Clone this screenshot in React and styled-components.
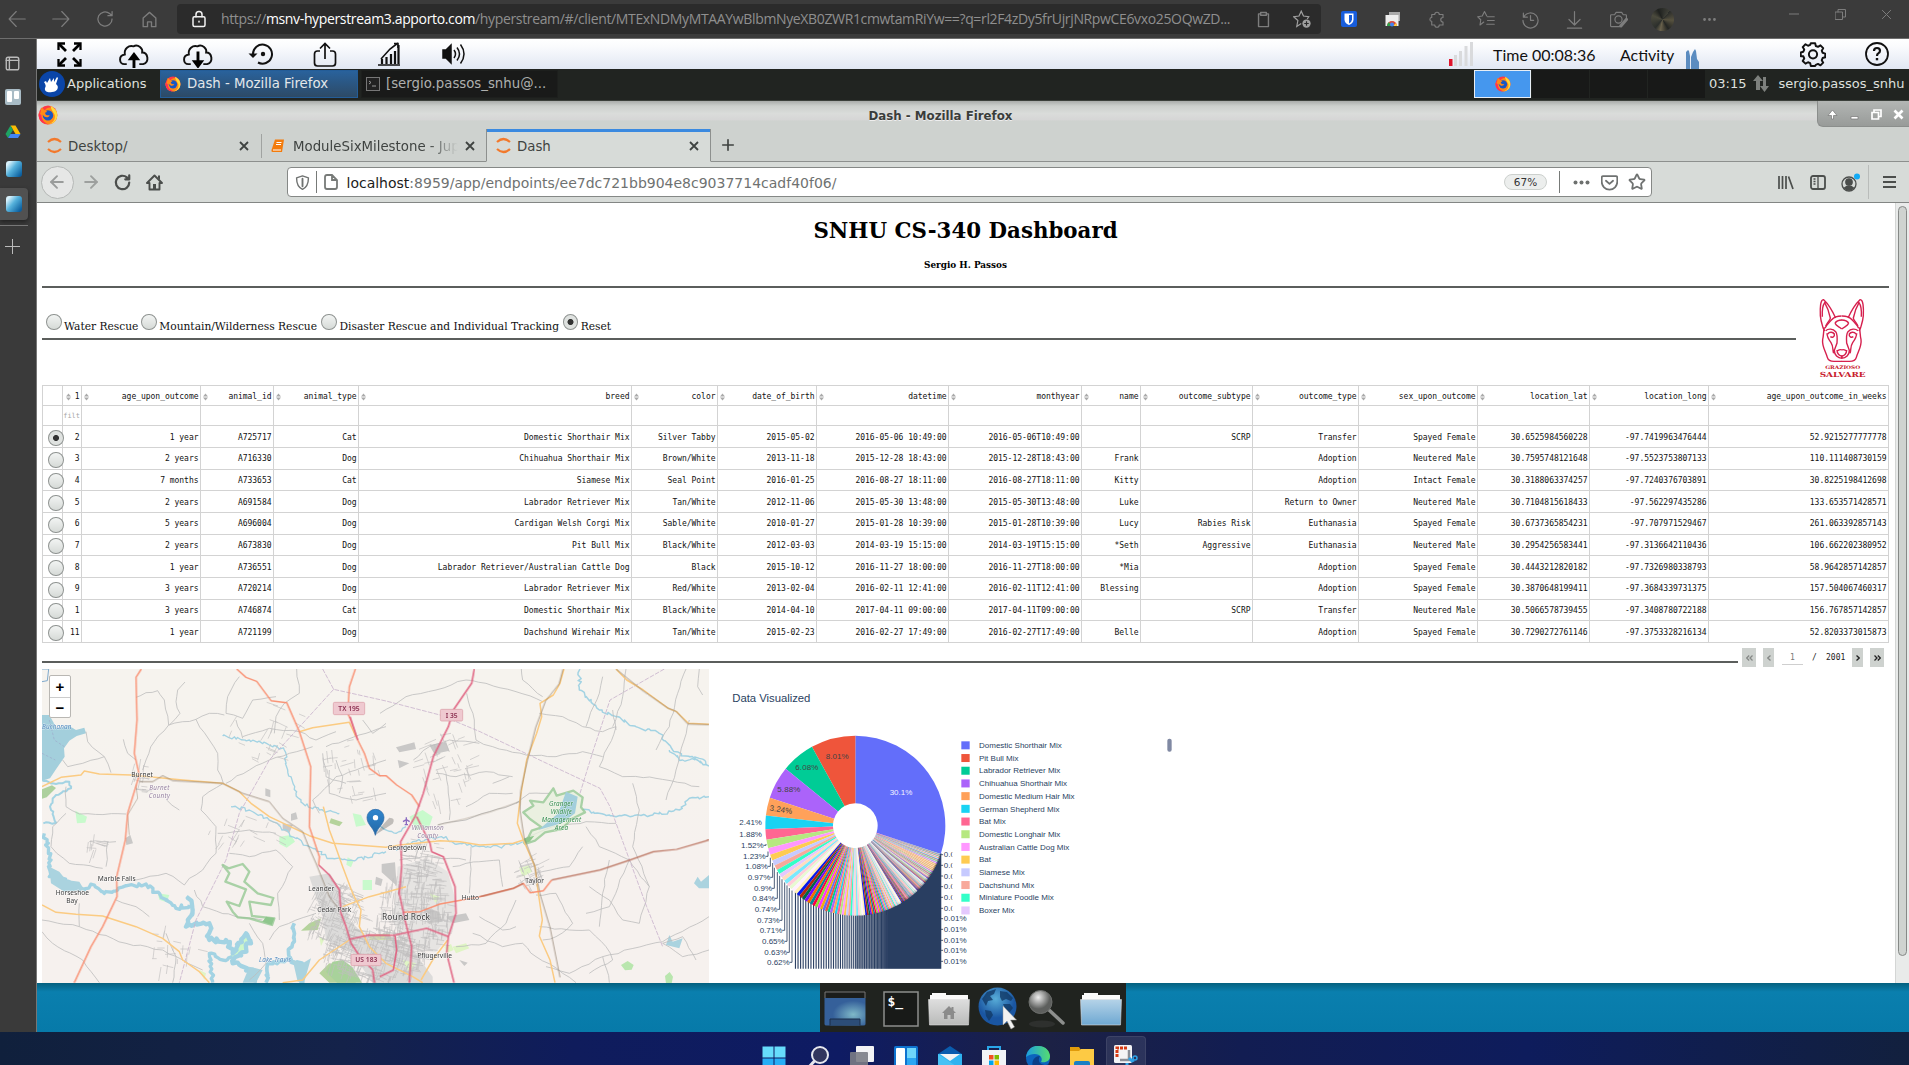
import React from "react";
import styled, { createGlobalStyle, css } from "styled-components";
import { ArrowLeft, ArrowRight, Plus, Star, Ellipsis } from "lucide-react";

const Global = createGlobalStyle`
  * { box-sizing: border-box; }
  body { margin: 0; overflow: hidden; background: #3b3b3b; }
  svg { display: block; flex: none; }
`;

const sans = `"DejaVu Sans", sans-serif`;
const serif = `"DejaVu Serif", serif`;
const mono = `"DejaVu Sans Mono", monospace`;

/* ---------- shell ---------- */
const Screen = styled.div`
  width: 1909px; height: 1065px; overflow: hidden;
  display: flex; flex-direction: column; background: #3b3b3b;
`;
const Row = styled.div`display: flex; height: 993px;`;
const Main = styled.main`width: 1872px; display: flex; flex-direction: column;`;
const Slot = styled.div`
  width: ${(p) => p.$w}px; height: 100%; flex: none;
  margin-left: ${(p) => p.$ml || 0}px;
  display: flex; align-items: center; justify-content: center;
`;
const Label = styled.span`
  white-space: pre; flex: none;
  margin-left: ${(p) => p.$ml || 0}px;
  width: ${(p) => (p.$w ? p.$w + "px" : "auto")};
`;

/* ---------- outer browser ---------- */
const EdgeBar = styled.header`
  height: 39px; display: flex; align-items: center; color: #7d7d7d;
  background: #3b3b3b; border-bottom: 1px solid #6e6e6e;
`;
const EdgeUrl = styled.div`
  margin-left: 6px; width: 1144px; height: 30px; border-radius: 4px;
  background: #2b2b2b; display: flex; align-items: center; flex: none;
`;
const EdgeText = styled.div`
  width: 1020px; white-space: pre; color: #8f8f8f;
  font: 14px/20px "Open Sans", sans-serif; letter-spacing: -0.353px;
  b { font-weight: 400; color: #fff; }
`;
const EdgeSep = styled.div`width: 1px; height: 16px; background: #6a6a6a; margin: 0 2px;`;
const WinButtons = styled.div`display: flex; height: 28px; align-self: flex-start; margin-left: 42px;`;
const Avatar = styled.div`
  width: 23px; height: 23px; border-radius: 50%;
  background: conic-gradient(from 40deg, #2a2c2a, #57523f, #232523 30%, #6a624c 42%, #2c2f2c 50%, #4b4a3d 70%, #1f211f 82%, #3e3f37);
`;

const Side = styled.aside`
  width: 37px; background: #3a3a3a; border-right: 1px solid #767676;
  display: flex; flex-direction: column; padding-top: 6px;
`;
const SideItem = styled.div`
  width: 28px; height: ${(p) => p.$h || 36}px;
  display: flex; align-items: center; padding-left: 4.5px;
  ${(p) => p.$on && css`background: #515151; border-radius: 0 4px 4px 0; box-shadow: 0 2px 4px #222; height: 32px; margin: 2px 0;`}
`;
const SideRule = styled.div`width: 28px; height: 1px; background: #777; margin-top: 3px;`;
const BlueBook = styled.div`
  width: 16px; height: 16px; border-radius: 3px; margin-left: 1px;
  background: linear-gradient(130deg, #d8f1fb 0 15%, #56b2dc 45%, #0b5f9f 90%);
`;

/* ---------- stream toolbar ---------- */
const StreamBar = styled.div`
  height: 30px; display: flex; align-items: center; color: #111;
  background: linear-gradient(#fff, #fafbfd 25%, #e1e7f3);
  font: 16px/30px Lato, sans-serif;
  ${Label} { padding-top: 2px; }
`;
const ActivityBars = styled.svg`margin-top: 10px;`;

/* ---------- desktop panel ---------- */
const Panel = styled.div`
  height: 32px; background: #212421; display: flex; align-items: center; padding-bottom: 2px;
  border-bottom: 1px solid #3b403b; color: #dfe0df; font: 13px/20px ${sans};
`;
const TaskButton = styled.div`
  height: 28px; width: ${(p) => p.$w}px; margin-left: ${(p) => p.$ml}px; flex: none;
  display: flex; align-items: center; padding: 1px 0 0 4px; gap: 6px; white-space: pre; font-size: 13.3px;
  background: ${(p) => (p.$on ? "linear-gradient(#29629c, #2d4a66)" : "#191a19")};
  border: 1px solid ${(p) => (p.$on ? "#245d98" : "#1d1f1d")};
  color: ${(p) => (p.$on ? "#e3e7ea" : "#aeb0ae")};
`;
const Pager = styled.div`
  width: 57px; height: 28px; flex: none; margin-left: ${(p) => p.$ml || 1}px;
  display: flex; align-items: center; justify-content: center;
  background: ${(p) => (p.$on ? "#4597ee" : "#181918")};
  border: 1px solid ${(p) => (p.$on ? "#e8eef5" : "#181918")};
`;

/* ---------- inner browser ---------- */
const TitleBar = styled.div`
  height: 28px; display: flex; align-items: center; flex: none;
  background: linear-gradient(#a9acaa, #ccd0cd 18%, #dadcda 45%, #d6d6d6 66%, #ced2cf 72%);
  color: #3a3d3b; font: bold 11.8px/20px ${sans}; text-shadow: 0 1px 0 #eee;
`;
const TitleText = styled.div`width: 150px; margin-left: 809.5px; white-space: pre; padding-top: 2px;`;
const TitleButtons = styled.div`
  margin-left: 798.5px; width: 92px; height: 26px; align-self: flex-start; display: flex; flex: none;
  background: linear-gradient(#b3b6b4, #989b99); border: 1px solid #8b8e8c; border-width: 0 0 1px 1px;
  border-radius: 0 0 0 6px; padding: 2px 0 0 3px;
`;
const TabStrip = styled.div`
  height: 33px; display: flex; background: #ced2cf; color: #3f4341; flex: none;
  font: 13.33px/34px ${sans};
`;
const Tab = styled.div`
  width: ${(p) => p.$w}px; height: 33px; display: flex; align-items: center; flex: none;
  border-bottom: 1px solid #8d908e; padding-top: 1px;
  ${(p) => p.$on && css`
    background: #d7dbd8; border: 1px solid #8d908e; border-bottom-color: #d7dbd8; border-top: 0;
    box-shadow: inset 0 3px 0 #3b8ae0;`}
`;
const TabName = styled.div`
  width: ${(p) => p.$w}px; height: 32px; margin-left: ${(p) => p.$ml || 5}px; overflow: hidden; white-space: pre;
  ${(p) => p.$fade && css`mask-image: linear-gradient(90deg, #000 80%, transparent 98%);`}
`;
const TabSep = styled.div`width: 1px; height: 24px; background: #a0a3a1; align-self: center; margin-left: auto;`;
const TabFill = styled.div`flex: 1; border-bottom: 1px solid #8d908e; padding-left: 8px; display: flex; align-items: center;`;
const NavBar = styled.div`
  height: 41px; flex: none; display: flex; align-items: center; background: #d7dbd8;
  border-bottom: 1px solid #838684; color: #4b4e4c;
`;
const BackCircle = styled.div`
  width: 33px; height: 33px; border: 1px solid #b5b8b6; border-radius: 50%; background: #e6e7e6;
  display: flex; align-items: center; justify-content: center; color: #9a9c9b;
`;
const UrlBox = styled.div`
  width: 1365px; height: 30px; margin-left: 119px; flex: none; background: #fff;
  border: 1px solid #858886; border-radius: 4px; display: flex; align-items: center;
  font: 14px/30px ${sans}; color: #6f7271; b { font-weight: 400; color: #1b1c1b; }
`;
const UrlText = styled.div`width: 1146px; padding: 1px 0 0 1.5px; white-space: pre;`;
const Pill = styled.div`
  width: 43px; height: 16px; border: 1px solid #ccd0cd; border-radius: 8px; background: #eceeed;
  font: 10.5px/15px ${sans}; color: #333; text-align: center; margin-left: 13px;
`;
const VRule = styled.div`width: 1px; height: ${(p) => p.$h || 22}px; background: ${(p) => p.$c || "#777a78"}; margin: 0 ${(p) => p.$r || 0}px 0 ${(p) => p.$l || 0}px; flex: none;`;

/* ---------- page ---------- */
const View = styled.div`height: 780px; display: flex; background: #fff; overflow: hidden;`;
const Page = styled.div`width: 1858px; padding: 0 6px 0 5px; display: flex; flex-direction: column; flex: none;`;
const Gutter = styled.div`width: 14px; background: #e9ebea; border-left: 1px solid #d4d6d5; padding: 3px 0 0 2px;`;
const Thumb = styled.div`width: 9px; height: 750px; border: 1px solid #868987; border-radius: 5px; background: #cfd3d0;`;
const Head = styled.div`height: 83px; text-align: center; color: #000; font-family: ${serif};`;
const H1 = styled.h1`margin: 0; padding-top: 15px; font-size: 21.35px; line-height: 26px;`;
const H5 = styled.h5`margin: 15px 0 0; font-size: 8.9px; line-height: 12px;`;
const Hr = styled.div`height: 2px; width: ${(p) => (p.$w ? p.$w + "px" : "100%")}; background: #5b5e5c; flex: none;`;
const Filters = styled.div`height: 97px; display: flex;`;
const FilterRow = styled.div`height: 50px; display: flex; padding: 26px 0 0 4px; font: 10.7px/14px ${serif}; color: #111;`;
const FilterItem = styled.label`width: ${(p) => p.$w}px; display: flex; flex: none; white-space: pre; letter-spacing: -0.02px; span { margin: 6px 0 0 2.5px; }`;
const Radio = styled.i`
  width: 15.5px; height: 16px; flex: none; border-radius: 50%; border: 1px solid #8f9391;
  background: ${(p) => (p.$on ? "radial-gradient(circle, #333 0 2.6px, #dfe2e0 3.4px)" : "linear-gradient(#f2f4f3, #d6dad7)")};
`;
const Logo = styled.svg`margin: 2px 0 0 9px;`;

const Grid = styled.div`
  display: grid; width: 1847px; flex: none;
  grid-template-columns: 20px 19px 119px 73px 85px 273px 86px 99px 132px 133px 59px 112px 106px 119px 112px 119px 180px;
  grid-template-rows: 20px 20px 22px 22px 21px 22px 22px 21px 22px 22px 21px 22px;
  border: solid #d3d3d3; border-width: 1px 0 0 1px; font: 8px/12px ${mono}; color: #111; letter-spacing: -0.025px;
`;
const Cell = styled.div`
  border: solid #d3d3d3; border-width: 0 1px 1px 0; padding: ${(p) => (p.$low ? 3 : 1)}px 1.5px 0 0; white-space: pre;
  display: flex; align-items: center; justify-content: flex-end; min-width: 0;
`;
const HeadCell = styled(Cell)`justify-content: space-between; padding: 2px 1.5px 0 ${(p) => (p.$first ? 2.5 : 1.5)}px;`;
const PickCell = styled(Cell)`justify-content: flex-start; padding: 2px 0 0 5px;`;
const FilterCell = styled(Cell)`color: #a6a6a6; font-size: 7px; padding: 0 1px 0 0;`;

const PageRow = styled.div`height: 26px; flex: none; display: flex; font: 8px/19px ${mono}; color: #222;`;
const PageHr = styled.div`width: 1696px; height: 20px; padding-top: 18px; flex: none;`;
const PageButton = styled.div`
  width: ${(p) => p.$w}px; height: 19px; margin: 5px 0 0 ${(p) => p.$ml}px; background: #ced2cf;
  color: ${(p) => (p.$off ? "#858886" : "#222")}; display: flex; align-items: center; justify-content: center;
`;
const PageInput = styled.div`width: 21px; height: 17px; margin: 5px 0 0 8px; border-bottom: 1px solid #cfcfcf; text-align: center; color: #777;`;
const PageText = styled.div`margin: 5px 0 0 ${(p) => p.$ml}px; width: ${(p) => p.$w}px;`;
const Bottom = styled.div`display: flex; height: 314px;`;
const MapBox = styled.div`width: 667px; height: 314px; position: relative; flex: none; background: #f5f2ee;`;
const ZoomBox = styled.div`
  position: absolute; left: 7px; top: 6px; width: 22px; height: 43px; background: #fff;
  border: 1px solid #b9b7b3; border-radius: 2px; display: flex; flex-direction: column;
  font: bold 15px/21px "Liberation Sans", sans-serif; text-align: center; color: #000;
  span { height: 21px; } span + span { border-top: 1px solid #ccc; line-height: 19px; }
`;
const Chart = styled.svg`margin: 11px 0 0 11px;`;

/* ---------- desktop + taskbar ---------- */
const Desktop = styled.div`
  height: 49px; display: flex; padding-left: 783px;
  background: linear-gradient(#04607f, #0a7fae 18%, #077aa9);
`;
const Dock = styled.div`
  width: 306px; height: 49px; background: #20231f; display: flex; align-items: center; padding-top: 2px;
`;
const Taskbar = styled.footer`
  height: 33px; display: flex; padding: 4px 0 0 752px; overflow: hidden;
  background: linear-gradient(90deg, #10203c 0, #14224a 18%, #0f1c5c 30%, #0e1b63 44%, #1c2145 55%, #121d52 65%, #0e1c5c 80%, #12203e 100%);
`;
const Task = styled.div`
  width: 40px; height: 40px; margin: 0 2px; border-radius: 4px; display: flex; padding-top: 10px; justify-content: center; flex: none;
  ${(p) => p.$on && css`background: rgba(255,255,255,.09); border: 1px solid rgba(255,255,255,.08); padding-top: 7px;`}
`;

/* ---------- icons ---------- */
const Line = ({ s = 24, vb = "0 0 24 24", w = 1.5, children, ...r }) => (
  <svg width={s} height={s} viewBox={vb} fill="none" stroke="currentColor" strokeWidth={w} strokeLinecap="round" strokeLinejoin="round" {...r}>{children}</svg>
);
const Fox = ({ s }) => (
  <svg width={s} height={s} viewBox="0 0 24 24">
    <circle cx="12" cy="12" r="11.3" fill="#ff3b45" />
    <path d="M4 3c2 1 3 2 4 4 3-5 8-5 13-1 4 7 1 17-9 17C5 23 0 18 1 10c1 1 1 1 2-1z" fill="#ff8a16" />
    <path d="M15 1c6 3 9 8 8 13-1 6-6 9-11 9 7-1 9-7 8-11-1-3-4-5-5-11z" fill="#ffd93b" />
    <path d="M1 10c-1 7 3 13 11 13-5-2-8-6-8-11z" fill="#ff2e55" />
    <circle cx="12" cy="12.5" r="6.2" fill="#1857c4" />
    <path d="M7 6c2 0 3 1 4 2.500-2 0-3 1-2 2.500 2 2 4 1 5 1.500-1 3-6 3-8-.5-1-2 0-4 1-6z" fill="#ff8a16" />
  </svg>
);
const Jup = () => (
  <svg width="17" height="17" viewBox="0 0 17 17" fill="none" stroke="#f2792c" strokeWidth="2.2">
    <path d="M2 5Q8.500-1 15 5M2 12Q8.500 18 15 12" />
  </svg>
);
const CloseX = ({ s = 10, w = 1.8 }) => <svg width={s} height={s} viewBox="0 0 10 10" stroke="currentColor" strokeWidth={w}><path d="M1 1l8 8M9 1L1 9" /></svg>;
const Chevrons = ({ dbl, flip }) => (
  <svg width={dbl ? 7 : 4} height="6" viewBox={dbl ? "0 0 7 6" : "0 0 4 6"} fill="none" stroke="currentColor" strokeWidth="1.3"
    transform={flip ? "scale(-1,1)" : undefined}>
    <path d={dbl ? "M.5.500 3 3 .5 5.500M3.800.500 6.300 3 3.800 5.500" : "M.5.500 3.200 3 .5 5.500"} />
  </svg>
);
const Sort = () => <svg width="5" height="8" viewBox="0 0 5 8" fill="#aaa"><path d="M0 3.400L2.500.500 5 3.400zM0 4.600h5L2.500 7.500z" /></svg>;
const Reload = ({ s, w }) => <Line s={s} w={w}><path d="M20.500 12a8.500 8.500 0 1 1-3-6.500L20.500 8M20.500 3v5h-5" /></Line>;
const House = ({ s, w }) => <Line s={s} w={w}><path d="M4 10l8-7 8 7v11h-5.500v-6h-5v6H4z" /></Line>;

function StreamIcons() {
  const clouds = "M9 24H6.500C1 24 0 15 7 14 6 8 11 4 16 5.500 21 3 26 8 25 12c6 0 8 10 1 12h-4";
  return (
    <>
      <Slot $w={64}><svg width="25" height="25" viewBox="0 0 25 25" fill="none" stroke="#000" strokeWidth="2.8">
        <path d="M2 2l7 7M23 2l-7 7M2 23l7-7M23 23l-7-7" /><path d="M1.500 8V1.500H8M17 1.500h6.500V8M1.500 17v6.500H8M17 23.500h6.500V17" strokeWidth="2.300" />
      </svg></Slot>
      {[0, 1].map((d) => (
        <Slot $w={64} key={d}><svg width="33" height="27" viewBox="0 0 32 28" fill="none" stroke="#111" strokeWidth="2">
          <path d={d ? clouds : clouds} />{d
            ? <path d="M16 12v9h-4l4.500 6L21 21h-4v-9z" fill="#000" stroke="#000" />
            : <path d="M16 27v-8h-4l4.500-6L21 19h-4v8z" fill="#000" stroke="#000" />}
        </svg></Slot>
      ))}
      <Slot $w={64}><svg width="26" height="24" viewBox="0 0 26 24" fill="none" stroke="#111" strokeWidth="2">
        <path d="M5 12A9.500 9.500 0 1 1 10 20.500" /><path d="M.5 11.500h9L5 16z" fill="#111" stroke="none" /><circle cx="15" cy="12" r="2.200" fill="#111" stroke="none" />
      </svg></Slot>
      <Slot $w={64}><svg width="24" height="25" viewBox="0 0 24 25" fill="none" stroke="#111" strokeWidth="1.700">
        <path d="M7 9H4.500Q1.500 9 1.500 12v9q0 3 3 3h15q3 0 3-3v-9q0-3-3-3H17M12 17V2M7 6.500L12 1.500l5 5" />
      </svg></Slot>
      <Slot $w={64}><svg width="24" height="24" viewBox="0 0 24 24" fill="none" stroke="#111" strokeWidth="1.600">
        <path d="M1 23h22M4 17L13 7l8-6M17 1.500h4V6" /><path d="M5 22v-5M9.500 22v-7M14 22V12M18 22V9M21.500 22V3" strokeWidth="2.200" />
      </svg></Slot>
      <Slot $w={64} $ml={1}><svg width="24" height="22" viewBox="0 0 24 22" fill="none" stroke="#111" strokeWidth="1.500">
        <path d="M1 7h3l5-5v18l-5-5H1z" fill="#111" /><path d="M12 7q3 4 0 8M15 4.500q5 6.500 0 13M18.500 1.500q7 9.500 0 19" />
      </svg></Slot>
    </>
  );
}

/* ---------- table data ---------- */
const columns = ["1", "age_upon_outcome", "animal_id", "animal_type", "breed", "color", "date_of_birth", "datetime", "monthyear", "name", "outcome_subtype", "outcome_type", "sex_upon_outcome", "location_lat", "location_long", "age_upon_outcome_in_weeks"];
const rows = [
  ["2", "1 year", "A725717", "Cat", "Domestic Shorthair Mix", "Silver Tabby", "2015-05-02", "2016-05-06 10:49:00", "2016-05-06T10:49:00", "", "SCRP", "Transfer", "Spayed Female", "30.6525984560228", "-97.7419963476444", "52.9215277777778"],
  ["3", "2 years", "A716330", "Dog", "Chihuahua Shorthair Mix", "Brown/White", "2013-11-18", "2015-12-28 18:43:00", "2015-12-28T18:43:00", "Frank", "", "Adoption", "Neutered Male", "30.7595748121648", "-97.5523753807133", "110.111408730159"],
  ["4", "7 months", "A733653", "Cat", "Siamese Mix", "Seal Point", "2016-01-25", "2016-08-27 18:11:00", "2016-08-27T18:11:00", "Kitty", "", "Adoption", "Intact Female", "30.3188063374257", "-97.7240376703891", "30.8225198412698"],
  ["5", "2 years", "A691584", "Dog", "Labrador Retriever Mix", "Tan/White", "2012-11-06", "2015-05-30 13:48:00", "2015-05-30T13:48:00", "Luke", "", "Return to Owner", "Neutered Male", "30.7104815618433", "-97.562297435286", "133.653571428571"],
  ["6", "5 years", "A696004", "Dog", "Cardigan Welsh Corgi Mix", "Sable/White", "2010-01-27", "2015-01-28 10:39:00", "2015-01-28T10:39:00", "Lucy", "Rabies Risk", "Euthanasia", "Spayed Female", "30.6737365854231", "-97.707971529467", "261.063392857143"],
  ["7", "2 years", "A673830", "Dog", "Pit Bull Mix", "Black/White", "2012-03-03", "2014-03-19 15:15:00", "2014-03-19T15:15:00", "*Seth", "Aggressive", "Euthanasia", "Neutered Male", "30.2954256583441", "-97.3136642110436", "106.662202380952"],
  ["8", "1 year", "A736551", "Dog", "Labrador Retriever/Australian Cattle Dog", "Black", "2015-10-12", "2016-11-27 18:00:00", "2016-11-27T18:00:00", "*Mia", "", "Adoption", "Spayed Female", "30.4443212820182", "-97.7326980338793", "58.9642857142857"],
  ["9", "3 years", "A720214", "Dog", "Labrador Retriever Mix", "Red/White", "2013-02-04", "2016-02-11 12:41:00", "2016-02-11T12:41:00", "Blessing", "", "Adoption", "Spayed Female", "30.3870648199411", "-97.3684339731375", "157.504067460317"],
  ["1", "3 years", "A746874", "Cat", "Domestic Shorthair Mix", "Black/White", "2014-04-10", "2017-04-11 09:00:00", "2017-04-11T09:00:00", "", "SCRP", "Transfer", "Neutered Male", "30.5066578739455", "-97.3408780722188", "156.767857142857"],
  ["11", "1 year", "A721199", "Dog", "Dachshund Wirehair Mix", "Tan/White", "2015-02-23", "2016-02-27 17:49:00", "2016-02-27T17:49:00", "Belle", "", "Adoption", "Spayed Female", "30.7290272761146", "-97.3753328216134", "52.8203373015873"],
];

/* ---------- pie ---------- */
const base = ["#636efa", "#EF553B", "#00cc96", "#ab63fa", "#FFA15A", "#19d3f3", "#FF6692", "#B6E880", "#FF97FF", "#FECB52"];
const light = ["#c6caff", "#f8a99b", "#33ffc8", "#e4c8fd", "#ffdcc0", "#7ae9fc", "#ffccda", "#e8fad2", "#fff0ff", "#fff0b8"];
const dark = ["#0718ea", "#b0260e", "#006649", "#7a0af5", "#f26c00", "#088599", "#ff0047", "#8bdb37", "#ff30ff", "#f2ad0c"];
const palette = [...base, ...light, ...dark];
const shares = [8.01, 6.08, 5.88, 3.24, 2.41, 1.88, 1.52, 1.23, 1.08, 0.97, 0.9, 0.84, 0.74, 0.73, 0.71, 0.65, 0.63, 0.62];
{
  let left = 69.9 - shares.reduce((a, b) => a + b, 0);
  for (let i = 0; left > 0.01; i++) {
    const v = Math.max(0.01, 0.6 * Math.exp(-i / 46));
    shares.push(v);
    left -= v;
  }
}
const CX = 406, CY = 437, R = 270, HOLE = 67;
const at = (pct, r) => {
  const a = (pct / 100) * Math.PI * 2;
  return [CX + Math.sin(a) * r, CY - Math.cos(a) * r];
};
const wedge = (from, to) => {
  const [x1, y1] = at(from, R), [x2, y2] = at(to, R), [x3, y3] = at(to, HOLE), [x4, y4] = at(from, HOLE);
  const big = to - from > 50 ? 1 : 0;
  return `M${x1} ${y1}A${R} ${R} 0 ${big} 1 ${x2} ${y2}L${x3} ${y3}A${HOLE} ${HOLE} 0 ${big} 0 ${x4} ${y4}Z`;
};
const slices = [];
{
  let pos = 100;
  shares.forEach((v, i) => {
    slices.push({ from: pos - v, to: pos, mid: pos - v / 2, color: palette[(i + 1) % 30] });
    pos -= v;
  });
}
const leftLabels = [["2.41%", 126, 427], ["1.88%", 126, 463], ["1.52%", 131, 496], ["1.23%", 137, 529], ["1.08%", 144, 559], ["0.97%", 151, 592], ["0.9%", 156, 625], ["0.84%", 165, 655], ["0.74%", 172, 688], ["0.73%", 179, 721], ["0.71%", 187, 751], ["0.65%", 194, 784], ["0.63%", 201, 817], ["0.62%", 209, 847]];
const legend = ["Domestic Shorthair Mix", "Pit Bull Mix", "Labrador Retriever Mix", "Chihuahua Shorthair Mix", "Domestic Medium Hair Mix", "German Shepherd Mix", "Bat Mix", "Domestic Longhair Mix", "Australian Cattle Dog Mix", "Bat", "Siamese Mix", "Dachshund Mix", "Miniature Poodle Mix", "Boxer Mix"];

function Pie() {
  const leaders = slices.slice(18).map((s) => at(s.mid, R));
  return (
    <Chart width="480" height="300" viewBox="0 0 1440 900" fontFamily="Liberation Sans, sans-serif" fontSize="24" fill="#2a3f5f">
      <text x="37" y="66" fontSize="34" textLength="234">Data Visualized</text>
      <path d="M406 706Q580 690 662 522V866H406z" fill="#24395d" opacity=".35" />
      <path d={leaders.map(([x, y]) => `M${x.toFixed(1)} ${(y - 3).toFixed(1)}V866`).join("")} stroke="#22375c" strokeWidth="3.4" fill="none" opacity=".95" />
      <path d={wedge(0, 30.1)} fill={base[0]} />
      {slices.map((s, i) => <path key={i} d={wedge(s.from, s.to)} fill={s.color} />)}
      <text x="509" y="346" fill="#f4f4ff" textLength="68">30.1%</text>
      <g fill="#444">
        <text x="317" y="238" textLength="69">8.01%</text>
        <text x="226" y="270" textLength="69">6.08%</text>
        <text x="172" y="336" textLength="69">5.88%</text>
        <text x="149" y="397" textLength="68" transform="rotate(9 183 388)">3.24%</text>
      </g>
      {leftLabels.map(([t, x, y], i) => (
        <g key={t}>
          <text x={x} y={y + 8} textAnchor="end" textLength={t.length > 4 ? 68 : 54}>{t}</text>
          {i > 1 && <path d={`M${x} ${y}h7V${Math.min(y, at(slices[i + 4].mid, R)[1])}`} fill="none" stroke="#2a3f5f" strokeWidth="2.5" />}
        </g>
      ))}
      {[524, 556, 588, 620, 652, 685, 716, 748, 781, 811, 844].map((y, i) => (
        <g key={y}>
          <path d={`M660 ${y}h9`} stroke="#2a3f5f" strokeWidth="2.5" />
          <text x="671" y={y + 8} textLength="69">0.01%</text>
          {i < 6 && <rect x="697" y={y - 14} width="50" height="28" fill="#fff" />}
        </g>
      ))}
      {legend.map((t, i) => {
        const y = 196 + i * 38.1;
        return (
          <g key={t}>
            <rect x="724" y={y - 12} width="25" height="24" fill={palette[i]} />
            <text x="777" y={y + 8}>{t}</text>
          </g>
        );
      })}
      <rect x="1342" y="176" width="13" height="39" rx="6" fill="#8089a3" />
    </Chart>
  );
}

/* ---------- map ---------- */
function rng(seed) {
  let s = seed;
  return () => ((s = (s * 16807) % 2147483647) / 2147483647);
}
/* turns a coarse polyline into a wavering one */
function wander(str, amp, step = 9, seed = 7) {
  const r = rng(seed * 991);
  const n = str.trim().split(/\s+/).map(Number);
  let d = `M${n[0]} ${n[1]}`;
  for (let i = 2; i < n.length; i += 2) {
    const [x0, y0, x1, y1] = [n[i - 2], n[i - 1], n[i], n[i + 1]];
    const k = Math.max(1, Math.round(Math.hypot(x1 - x0, y1 - y0) / step));
    for (let j = 1; j <= k; j++) {
      const e = j === k ? 0 : amp;
      d += `L${(x0 + ((x1 - x0) * j) / k + (r() - 0.5) * 2 * e).toFixed(1)} ${(y0 + ((y1 - y0) * j) / k + (r() - 0.5) * 2 * e).toFixed(1)}`;
    }
  }
  return d;
}
function streets(cx, cy, rx, ry, count, seed, tilt) {
  const r = rng(seed);
  let d = "";
  for (let i = 0; i < count; i++) {
    const a = r() * 6.28, q = Math.sqrt(r());
    const x = cx + Math.cos(a) * rx * q, y = cy + Math.sin(a) * ry * q;
    const t = tilt + (r() > 0.5 ? 1.57 : 0) + (r() - 0.5) * 0.3, l = 14 + r() * 30;
    d += `M${x.toFixed(0)} ${y.toFixed(0)}l${(Math.cos(t) * l).toFixed(0)} ${(Math.sin(t) * l).toFixed(0)}`;
  }
  return d;
}
const minor = [
  "300 112 330 98 365 92 385 120 398 195 355 245 330 300 320 330", "398 195 480 178 520 160 565 165", "447 66 425 90 420 125 432 160 400 195",
  "480 178 520 240 545 280 545 330 562 370 500 410 495 450 540 500 540 580 500 630 460 655 445 675 390 640 300 660",
  "150 215 155 245 205 290 225 338", "80 300 95 320 140 310 205 290", "262 238 275 280 300 300", "90 380 90 440 130 462 270 462", "90 460 50 500 45 560 100 610 200 625",
  "160 545 240 545", "215 545 210 620", "390 418 430 450", "610 50 575 110 570 160 620 175 650 120 720 110", "620 230 700 205 790 215 840 240 900 215",
  "570 370 640 330 700 300 760 280 830 260", "782 27 790 100 745 130 720 170 715 220", "600 180 620 235", "545 520 640 510 720 520", "580 580 640 590 720 570 770 620 725 700 730 780",
  "640 790 680 850 690 910 640 960", "475 690 500 740 600 770 680 780", "18 780 130 800 270 850 380 870 500 930", "18 815 50 850 140 900 190 968", "130 730 130 800",
  "390 820 420 890 410 968", "240 720 300 740 340 770", "700 840 730 800 780 780 840 760", "850 460 830 420 900 350 960 330 1050 300", "880 330 880 400 960 420 1050 400",
  "870 260 930 240 990 220 1050 200", "860 280 870 350 930 370", "900 300 920 350 910 400", "980 180 1010 220 1050 190",
  "1032 160 1110 110 1200 90 1290 60 1350 70 1440 95 1520 125", "1292 100 1315 180 1320 240 1370 260 1470 285 1560 290 1640 275 1700 290", "1456 27 1460 60 1520 110",
  "1510 160 1580 170 1640 200 1700 215 1740 200 1700 300 1690 320 1760 350 1860 355 1990 380", "1730 150 1740 210", "1770 27 1760 110 1730 200", "1700 50 1690 100 1650 200",
  "1950 27 1925 100 1900 200 1860 270", "1960 180 1920 330 1890 420", "1990 27 1985 80 2000 105", "1205 495 1290 480 1360 455 1450 425", "1440 430 1480 400 1540 400",
  "1132 300 1180 260 1240 240 1330 250", "1200 340 1260 350 1350 335 1430 350", "1230 340 1240 420 1240 480", "1290 440 1360 400 1430 400", "1460 540 1550 500 1650 485 1740 490",
  "1440 720 1410 790 1350 850 1260 860", "1500 705 1560 700 1610 790 1560 830 1520 840", "1510 800 1600 810 1660 810 1710 860 1730 900 1660 940", "1330 770 1400 810 1440 800",
  "1310 820 1400 860 1460 850 1500 890 1580 940 1620 968", "1530 920 1600 940 1700 890 1880 845 2019 770", "1660 680 1720 720 1760 780 1810 790 1840 680 1780 600 1690 560 1650 500",
  "1790 370 1810 450 1790 560 1840 680", "1720 600 1700 700 1690 800", "1650 760 1720 740 1780 600", "1880 850 1940 890 2019 870", "1880 850 1940 830 1980 900", "1700 890 1720 968",
  "1090 600 1180 590 1290 600", "1305 560 1300 700", "1250 620 1290 610 1390 600 1400 680", "1500 640 1600 620 1640 560", "1370 370 1420 350",
];
const water = [
  ["560 228 640 240 700 255 745 270 755 330 780 400 800 430 850 450 910 460", 5, 4], ["585 440 640 450 700 480 760 520 820 560 880 595 960 600 1050 575", 5, 4],
  ["1632 27 1630 90 1690 150 1740 170 1800 200 1870 220 1910 270 1960 290 2019 318", 6, 4.5], ["1640 450 1740 470 1850 465 1930 450 1960 415 2019 410", 5, 4.5],
  ["1900 270 1940 300 1990 295 2010 315", 7, 4],
  ["1080 570 1130 545 1230 530 1240 545 1330 560 1400 560 1460 545", 5, 4], ["1032 500 1080 520 1110 500", 4, 4],
  ["18 360 60 372 100 365 105 385 60 405 42 440 60 488 22 490", 4, 6], ["25 520 45 600 40 650 80 655 130 690 175 675 200 695 245 690 290 675 330 672 375 710 420 745 460 735", 6, 10],
  ["460 710 470 750 450 800 520 790 520 840 570 840 590 880 630 820 645 850 590 910 660 935 655 968", 8, 13], ["590 890 560 900 520 880 530 968", 6, 10],
  ["775 790 770 850 750 900 700 910 690 968", 7, 11], ["760 890 800 920 790 968", 8, 14],
];
const orange = ["316 27 300 52 303 180 295 280 310 345 275 460 268 540 242 650 243 710 200 800 165 860 115 968", "602 27 630 52 662 64 705 122 752 128 790 215 824 320 820 500 850 590 848 615", "958 27 940 80 935 160 942 175 965 240 985 280 1000 325 1030 347 1050 347 1082 375 1127 405 1150 440", "1102 757 1152 755 1212 732 1332 710 1432 685 1462 670 1482 698 1522 692 1547 660"];
const yellow = ["18 380 75 352 135 345 145 333 190 342 285 345 440 360 560 370 610 395 645 430 700 470 820 527 890 550 1050 562 1092 555 1212 542 1272 545 1332 555 1432 550 1462 540", "862 440 880 510 895 550 920 620 950 700 975 750 970 800 1000 860 1050 910 1130 950 1160 968", "790 215 830 203 940 187 960 230", "18 735 60 757 120 763 200 768 300 800 380 835 430 875 440 900 490 935 520 968", "1584 27 1572 70 1552 105 1512 130 1517 170 1502 220 1472 300 1462 360 1452 420 1444 490 1462 540 1497 620 1507 700 1519 780 1510 828 1542 900 1557 968", "1740 27 1772 60 1822 90 1897 145 1922 155 1957 190 2019 193", "920 740 1000 710 1050 697 1110 680", "1235 840 1190 900 1155 960", "740 968 800 960 850 900 940 840"];
const magenta = ["848 615 880 645 910 690 915 760 930 800 945 850 965 880 1010 930 1015 968", "940 838 1000 825 1072 826 1172 805 1237 830", "1315 27 1307 70 1252 150 1237 200 1192 290 1162 400 1137 470 1094 545 1097 620 1090 700 1107 780 1127 860 1120 968", "1142 470 1182 550 1187 575 1222 590 1257 680 1260 760 1237 830 1232 880 1254 968", "1077 826 1082 870 1072 930 1032 950", "942 170 965 240"];

function TexasMap() {
  return (
    <svg width="667" height="314" viewBox="18 27 2001 942" preserveAspectRatio="none" fill="none" strokeLinejoin="round" fontFamily="Noto Sans, sans-serif">
      <defs>
        <linearGradient id="land" x1="0" y1="0" x2="0" y2="1"><stop offset=".2" stopColor="#f6f3ee" /><stop offset=".6" stopColor="#f6f1ee" /></linearGradient>
        <linearGradient id="pin" x1="0" y1="0" x2="0" y2="1"><stop stopColor="#2f86cf" /><stop offset="1" stopColor="#2468a5" /></linearGradient>
      </defs>
      <rect x="18" y="27" width="2001" height="942" fill="url(#land)" />
      <path d="M18 165L40 165 62 205 100 198 120 210 145 203 150 220 122 228 100 242 84 265 86 290 62 325 42 355 18 362z" fill="#a3cfdc" />
      <path d="M18 27H38L34 62 18 65" stroke="#7fa9cc" strokeWidth="3" />
      <path d="M40 180l15 60 30 20M18 280l40 20" stroke="#9a8fc0" strokeWidth="2" strokeDasharray="8 5" opacity=".6" />
      <path d="M18 388l30-12 12 8-28 28-14 4z" fill="#add19e" />
      <path d="M118 452l35 18-5 18-25 2zM730 530l35-5 12 20-25 18-22-12zM365 700l35 5-8 22-22-8zM950 460l25 5 15 30-30 5zM980 660h28v30h-28zM935 592l18 10-8 20-14-8zM1120 470l40-20 30 20-10 30-40 10z" fill="#c8facc" />
      <path d="M610 840l25-25 10 30-40 45-30 10z" fill="#cdf7c9" />
      <path d="M820 790l35-15-10 35-50 2zM850 940l30-30 40 10 40 48H880zM885 475l35 12-10 12-30-10z" fill="#b5d39c" />
      <path d="M870 935l20-30 30-5 28 20 30 48h-75z" fill="#a8d29b" />
      <path d="M1000 825l60-5 15 40-40 20-35-15z" fill="#cfdcae" />
      <path d="M820 650l60-10 40 60 20 80 60 60 90 0 40 30 60 80v20H1010l-60-90-80-40-10-70z" fill="#dcdbda" />
      <path d="M1085 620l90-25 60 40 25 90-10 90-50 60-90-10-40-80z" fill="#e6e4e2" />
      <path d="M1037 612l40-5 5 70-45-40zM1180 255l50-8 10 25-45 10zM1080 262l55-15 5 20-50 10zM1085 300l35 10-30 15zM268 535l15-10 8 25-20 5zM688 385l15 5v22l-15-5zM765 462l15-5 5 20-20 5zM1230 770l60-10 10 20-50 10zM1160 740l50 15 10 30-45 5zM1270 900l25 8-10 10zM1020 650l20 8-5 20-18-5zM740 490l30 5-10 25-20-10z" fill="#c9c8c7" />
      <path d="M1180 700l30 10-10 20zM1250 860l40-10 10 15-40 15zM1450 625l30-10 8 20-28 15zM1100 900l40 10-20 30zM1225 860l20-8 8 18-20 8zM850 830l15 8-10 20zM490 930l20 10-5 20z" fill="#dff5c4" />
      <path d="M1755 915l20-12 18 12-6 14-20 2zM1890 970l-3-22 14-12 10 14-4 20z" fill="#b9e6ae" />
      {water.map(([p, a, w], i) => <path key={i} d={wander(p, a, 8, i + 3)} stroke="#a3d3e3" strokeWidth={w} />)}
      <path d="M1985 650l10 15 24-20v40l-30 0-15-15zM1900 825l10 20 30-10-10 30-40-10zM40 620l30 15 20 25 40 5 15 25-60 5-40-25zM640 920l40 10-20 38h-40zM770 900l30 10 25-15-20 70h-20z" fill="#aad3df" />
      <g stroke="#bdbdbd" strokeWidth="2.400">
        {minor.map((p, i) => <path key={i} d={wander(p, 3, 22, i + 11)} />)}
      </g>
      <g stroke="#bfbebe" strokeWidth="1.900">
        <path d={streets(900, 760, 80, 100, 170, 77, 0.4)} />
        <path d={streets(1010, 880, 150, 80, 300, 78, 0.3)} />
        <path d={streets(1130, 760, 110, 130, 300, 79, 0.08)} />
        <path d={streets(1150, 590, 60, 60, 60, 80, 0.2)} />
        <path d={streets(1220, 320, 90, 110, 46, 81, -0.3)} />
        <path d={streets(1470, 640, 40, 50, 40, 82, -0.4)} />
        <path d={streets(940, 330, 90, 110, 34, 83, -0.2)} />
        <path d={streets(175, 545, 30, 30, 12, 84, 0.2)} />
        <path d={streets(310, 350, 18, 60, 18, 85, 0.2)} />
        <path d={streets(690, 200, 110, 110, 24, 86, 0.4)} />
        <path d={streets(410, 860, 80, 70, 20, 87, 0.1)} />
        <path d={streets(630, 520, 110, 60, 20, 88, 0.5)} />
      </g>
      <g stroke="#c9b3cd" strokeWidth="2.500" strokeDasharray="14 4">
        <path d="M860 27L893 88 1050 123 1212 165 1332 215 1532 310 1692 385 1722 440 1832 740 1880 860" />
        <path d="M893 88L700 300 610 460 570 600 480 780 430 968M1885 27L1722 120 1672 270 1632 400" />
      </g>
      <g fill="none" stroke="#8fc68d" strokeWidth="7" opacity=".75">
        <path d="M560 615L578 625 620 612 640 635 625 665 665 700 712 714 705 735 640 725 648 768 715 775 708 795 640 775 605 772 590 755 572 725 610 738 630 688 568 665 580 640z" />
        <path d="M1552 385l10 22 50-15 28 20-5 30 12 15-40 20-30 30-50 10-30 25-30 10 20-40 30-10-35-25-20-20 30-20-10-15 40 5z" fill="#e6f0dc" />
      </g>
      <path d="M690 770l25 5-8 20-28-10zM1465 535l30-8-14 18-20 6z" fill="#8fc68d" />
      <path d="M1590 395l35 15-8 50-40 30-70 20 60-50z" fill="#a3cfdc" />
      {yellow.map((p) => <path key={p} d={"M" + p} stroke="#fbcb82" strokeWidth="4.500" />)}
      <g stroke="#8b7a66" strokeWidth="2.500" opacity=".85">
        <path d="M310 365l40 0 30-18 30 15 150 8 60 30 80 25 40 50 60 40 20 50 20 45 40 100 30 40M1581 27l-12 45-40 50-30 80-25 100-20 90-2 60 12 80 30 80 18 90 30 100 30 150M1740 27l80 65 75 52 25 10 35 38 64 2" />
        <path d="M300 375l5 40-30 50 5 60" opacity=".6" />
        <path d="M1205 495l80-18 80-22 85-30" opacity=".6" />
      </g>
      {orange.map((p) => <path key={p} d={"M" + p} stroke="#f98b6c" strokeWidth="4.500" opacity=".9" />)}
      <path d="M1547 660L1692 630 1782 600 1852 575 1922 568 2019 540M1332 710L1432 685 1462 670" stroke="#b9705c" strokeWidth="3.500" />
      {magenta.map((p) => <path key={p} d={"M" + p} stroke="#e0607f" strokeWidth="5" opacity=".92" />)}
      <g strokeWidth="2" stroke="#d998a5" fill="#efc9d0">
        <rect x="892" y="127" width="94" height="37" rx="4" /><rect x="1213" y="148" width="67" height="35" rx="4" /><rect x="945" y="883" width="90" height="34" rx="4" />
      </g>
      <g fill="#8a2f50" fontSize="20" fontWeight="600" textAnchor="middle">
        <text x="939" y="153" textLength="64">TX 195</text><text x="1247" y="174" textLength="36">I 35</text><text x="991" y="907" textLength="66">US 183</text>
      </g>
      <g fill="#3a3a3a" fontSize="20" textAnchor="middle" stroke="#fff" strokeWidth="3" strokeOpacity=".7" paintOrder="stroke">
        <text x="318" y="351" textLength="65">Burnet</text><text x="242" y="662" textLength="114">Marble Falls</text><text x="109" y="706" textLength="100">Horseshoe</text><text x="108" y="730" textLength="34">Bay</text>
        <text x="856" y="692" textLength="78">Leander</text><text x="895" y="757" textLength="102">Cedar Park</text><text x="1113" y="569" textLength="116">Georgetown</text>
        <text x="1303" y="721" textLength="52">Hutto</text><text x="1496" y="670" textLength="56">Taylor</text><text x="1196" y="893" textLength="104">Pflugerville</text>
        <text x="1110" y="781" fontSize="25" textLength="144">Round Rock</text>
      </g>
      <g fontSize="19" fontStyle="italic" textAnchor="middle" stroke="#fff" strokeWidth="2.500" strokeOpacity=".6" paintOrder="stroke">
        <g fill="#95809f"><text x="370" y="389" textLength="60">Burnet</text><text x="370" y="413" textLength="64">County</text><text x="1175" y="510" textLength="96">Williamson</text><text x="1175" y="533" textLength="62">County</text></g>
        <g fill="#4f88bd"><text x="62" y="206" textLength="88">Buchanan</text><text x="717" y="907" textLength="96">Lake Travis</text></g>
        <g fill="#2f8a49"><text x="1575" y="439" textLength="72">Granger</text><text x="1576" y="463" textLength="64">Wildlife</text><text x="1576" y="487" textLength="118">Management</text><text x="1576" y="510" textLength="40">Area</text></g>
      </g>
      <path d="M1111 472v22M1101 485l10-6 10 6M1106 494h10" stroke="#8b6cc0" strokeWidth="4" />
      <path d="M1018 525l22-30 20-22q20 0 10 18z" fill="#000" opacity=".22" />
      <path d="M1018 526C1012 500 993 495 993 472a25.500 24 0 0 1 51 0C1044 495 1025 500 1018 526z" fill="url(#pin)" stroke="#2462a0" strokeWidth="2" />
      <circle cx="1018.500" cy="473" r="8" fill="#fff" />
    </svg>
  );
}

function DogLogo() {
  const half = (
    <g>
      <path d="M92 84C82 62 68 40 56 29c-10-2-11 26-10 48 1 14 5 26 8 36l5 10M52 80c-1-18 1-34 7-42 6 10 13 26 17 46 0 6-6 8-14 24" />
      <path d="M58 112c-3 12-2 26-5 36-3 20 8 34 14 54 2 8 8 12 20 12h24M110 78c-16 0-22 2-30 11-8 9-16 16-20 26" />
      <path d="M62 122c8-7 22-6 30 3 6 8 5 20 4 34l-8 22c0 14 10 24 23 24M68 132c6-8 16-6 20 0 2 8-6 12-12 8M66 130c0 12 6 20 12 28 8 12 4 22 8 32" />
      <path d="M90 100c4-8 12-10 21-10M90 100c4 9 14 10 20 17M98 182q8-5 13-2M96 180c0 12 8 18 15 18M111 198v6" />
    </g>
  );
  return (
    <Logo width="80" height="95" viewBox="0 0 240 285" fill="none" stroke="#d6204e" strokeWidth="4.200">
      {half}<g transform="translate(221 0) scale(-1 1)">{half}</g>
      <g stroke="none" fill="#c8202c" fontFamily="DejaVu Serif, serif" textAnchor="middle">
        <text x="113" y="238" fontSize="14" fontWeight="bold" textLength="105" lengthAdjust="spacingAndGlyphs">GRAZIOSO</text>
        <text x="113" y="262" fontSize="21" fontWeight="bold" textLength="138" lengthAdjust="spacingAndGlyphs">SALVARE</text>
      </g>
    </Logo>
  );
}

/* ---------- dock ---------- */
const Folder = ({ c1, c2, home }) => (
  <svg width="42" height="34" viewBox="0 0 42 34">
    <defs><linearGradient id={"f" + c1.slice(1)} x1="0" y1="0" x2="0" y2="1"><stop stopColor={c1} /><stop offset="1" stopColor={c2} /></linearGradient></defs>
    <path d="M2 8V3h2V1h14v2h22v5z" fill="#fafafa" /><path d="M.5 7.500h41L40.500 33H1.500z" fill={`url(#f${c1.slice(1)})`} stroke="#ddd" strokeWidth=".6" />
    {home && <path d="M14 21l7-7 2.500 2.500V15h2v3.500L28 21h-2v6h-3.500v-4h-3v4H16v-6z" fill="#8b8b8b" />}
  </svg>
);
function DockIcons() {
  return (
    <>
      <Slot $w={42} $ml={4}><svg width="42" height="35" viewBox="0 0 42 35">
        <defs><radialGradient id="dk" cx=".7" cy=".6"><stop stopColor="#7fb9c8" /><stop offset="1" stopColor="#35609a" /></radialGradient></defs>
        <path d="M1 7V1h40v6" fill="#1b1d1b" stroke="#777" /><path d="M.5 7h41v26q0 1.500-2 1.500h-37q-2 0-2-1.500z" fill="url(#dk)" /><path d="M6 34.500V28h30v6.500" fill="#2c4d77" stroke="#1b2f4a" /></svg></Slot>
      <Slot $w={36} $ml={17}><svg width="36" height="36" viewBox="0 0 36 36">
        <rect x="1" y="1" width="34" height="34" fill="#181a18" stroke="#8c8e8c" strokeWidth="1.500" />
        <text x="4.500" y="15" fill="#fff" fontFamily="DejaVu Sans Mono, monospace" fontWeight="bold" fontSize="13">$_</text></svg></Slot>
      <Slot $w={42} $ml={9}><Folder c1="#dedede" c2="#b9bab9" home /></Slot>
      <Slot $w={42} $ml={8}><svg width="42" height="43" viewBox="0 0 42 43">
        <defs><radialGradient id="gl" cx=".45" cy=".3"><stop stopColor="#58add8" /><stop offset="1" stopColor="#1a56a2" /></radialGradient></defs>
        <circle cx="19.500" cy="19.500" r="19" fill="url(#gl)" />
        <path d="M4 12l5-7 9-3-2 5-4 2 3 4-5 1-2 5zM7 23l6 1 2 4-4 6-3-5zM22 4l7 1 6 6-2 3-5-2-4 2-2-4zM25 17l7 0 3 4-4 5-3-3z" fill="#123a66" opacity=".8" />
        <path d="M25 19v19l4-4 4 8 3.500-2-4-7h6z" fill="#f2f2f2" stroke="#999" strokeWidth=".5" /></svg></Slot>
      <Slot $w={40} $ml={7}><svg width="38" height="38" viewBox="0 0 38 38">
        <defs><radialGradient id="mg" cx=".4" cy=".3"><stop stopColor="#eee" /><stop offset="1" stopColor="#5d5f5d" /></radialGradient></defs>
        <ellipse cx="14" cy="34" rx="13" ry="3.500" fill="#2e302e" /><path d="M20 19L35 33" stroke="#8d8f8d" strokeWidth="3.500" strokeLinecap="round" />
        <circle cx="12.500" cy="12" r="11.500" fill="url(#mg)" stroke="#6c6e6c" /></svg></Slot>
      <Slot $w={42} $ml={13}><Folder c1="#b5d3e8" c2="#6ea8d2" /></Slot>
    </>
  );
}

function Tasks() {
  return (
    <>
      <Task><svg width="24" height="24" viewBox="0 0 24 24"><path d="M.5.500h11v11H.5zM12.500.500h11v11h-11z" fill="#66dcfb" /><path d="M.5 12.500h11v11H.5zM12.500 12.500h11v11h-11z" fill="#26aef5" /></svg></Task>
      <Task><svg width="24" height="24" viewBox="0 0 24 24" fill="#32365e" stroke="#e6e7ee" strokeWidth="2"><circle cx="14" cy="9" r="8" /><path d="M8.500 15L2 22" strokeWidth="3" /></svg></Task>
      <Task><svg width="26" height="24" viewBox="0 0 26 24"><rect x="7" y="0" width="18" height="16" rx="1" fill="#f3f3f5" /><rect x="1" y="6" width="18" height="15" rx="1" fill="#7b7d86" opacity=".9" /></svg></Task>
      <Task><svg width="24" height="24" viewBox="0 0 24 24"><rect width="24" height="24" rx="1.500" fill="#0e73d0" /><rect x="2" y="2" width="9" height="20" rx="1" fill="#fff" /><rect x="13" y="2" width="9" height="10" fill="#6fd6fb" /><rect x="13" y="12" width="9" height="10" fill="#2ba6f2" /></svg></Task>
      <Task><svg width="24" height="24" viewBox="0 0 24 24"><path d="M0 8L12 0l12 8z" fill="#0a5cae" /><path d="M0 8h24v16H0z" fill="#2fb3f0" /><path d="M2 8h20L12 15z" fill="#f4f4f4" /><path d="M0 8l24 16H0z" fill="#51c9f7" opacity=".7" /></svg></Task>
      <Task><svg width="24" height="24" viewBox="0 0 24 24"><path d="M6 5V1h12v4" fill="none" stroke="#2aa6e8" strokeWidth="2" /><path d="M0 4h24v20H0z" fill="#f1f3f6" /><path d="M7 9h4.500v4.500H7z" fill="#f25022" /><path d="M12.500 9H17v4.500h-4.500z" fill="#7fba00" /><path d="M7 14.500h4.500V19H7z" fill="#00a4ef" /><path d="M12.500 14.500H17V19h-4.500z" fill="#ffb900" /></svg></Task>
      <Task><svg width="24" height="24" viewBox="0 0 24 24"><defs><linearGradient id="ed"><stop stopColor="#1c9de0" /><stop offset="1" stopColor="#55dc70" /></linearGradient></defs>
        <circle cx="12" cy="12" r="12" fill="#0c64bd" /><path d="M0 11C1 4 6-1 13 0c7 0 11 6 11 10 0 5-4 7-9 6 1-2 1-3 0-5-2-4-10-4-15 0z" fill="url(#ed)" /><path d="M8 24C4 16 8 10 14 10c-3 5 0 9 6 9l3-1c-3 5-9 8-15 6z" fill="#0a3f88" /></svg></Task>
      <Task><svg width="24" height="24" viewBox="0 0 24 24"><path d="M0 1h9l2 3h13v5H0z" fill="#e09b0b" /><path d="M0 5h9l2-2h13v20H0z" fill="#fdca44" /><path d="M4 24v-7q0-2 2-2h12q2 0 2 2v7z" fill="#1b7fc4" /></svg></Task>
      <Task $on><svg width="26" height="26" viewBox="0 0 26 26"><rect x="1" y="1" width="18" height="18" rx="1.500" fill="#f3f4f6" /><path d="M4 13V4h10" fill="none" stroke="#d63b14" strokeWidth="3" strokeDasharray="3 1" /><path d="M16 6v10H7" fill="none" stroke="#8a8f98" strokeWidth="2.500" /><path d="M16 14l3 3 2-1M14 19v4" stroke="#2da3e8" strokeWidth="3" /><circle cx="22" cy="14" r="2" fill="none" stroke="#2da3e8" strokeWidth="1.500" /></svg></Task>
    </>
  );
}

export default function App() {
  return (
    <Screen>
      <Global />
      <EdgeBar>
        <Slot $w={44} $ml={-5}><Line s={18} w={1.500}><path d="M23 12H2M11 2L1.500 12l9.500 10" /></Line></Slot>
        <Slot $w={44}><Line s={18} w={1.500}><path d="M1 12h21M13 2l9.500 10L13 22" /></Line></Slot>
        <Slot $w={44}><Reload s={20} w={1.500} /></Slot>
        <Slot $w={44}><House s={19} w={1.700} /></Slot>
        <EdgeUrl>
          <Slot $w={44}><Line s={18} w={2} color="#f2f2f2"><rect x="4" y="9" width="16" height="13" rx="2" /><path d="M8 9V6a4 4 0 0 1 8 0v3M12 15v1" /></Line></Slot>
          <EdgeText>https://<b>msnv-hyperstream3.apporto.com</b>/hyperstream/#/client/MTExNDMyMTAAYwBlbmNyeXB0ZWR1cmwtamRiYw==?q=rl2F4zDy5frUjrjNRpwCE6vxo25OQwZD...</EdgeText>
          <Slot $w={44}><Line s={17} w={2}><path d="M8 4H5v18h14V4h-3M8 2h8v4H8z" /></Line></Slot>
          <Slot $w={34}><svg width="18" height="18" viewBox="0 0 24 24" fill="none" stroke="#a0a0a0" strokeWidth="1.600"><path d="M11 18l-6 4 1.500-8L1 9l7-1 3-6.500L14 8l7 1-2 3" /><circle cx="18" cy="18" r="5.500" fill="#a0a0a0" stroke="none" /><path d="M18 15v6M15 18h6" stroke="#2b2b2b" /></svg></Slot>
        </EdgeUrl>
        <Slot $w={44} $ml={6}><svg width="16" height="16" viewBox="0 0 16 16"><rect width="16" height="16" rx="2" fill="#175ddc" /><path d="M3.500 2.500h9v6q0 3.500-4.500 5.500-4.500-2-4.500-5.500z" fill="#fff" /><path d="M8 4v8.500q3-2 3-4V4z" fill="#175ddc" /></svg></Slot>
        <Slot $w={44}><svg width="16" height="15" viewBox="0 0 16 15"><rect x="4" y="0" width="11" height="9" fill="#aaa" /><rect x="0.500" y="3" width="13" height="11" fill="#eee" /><path d="M2 14a5 5 0 0 1 10 0z" fill="#dd4b39" /><path d="M2 14a5 5 0 0 1 2-4l2 4z" fill="#2ba24c" /><path d="M12 14a5 5 0 0 0-1-3l-3 3z" fill="#ffcd40" /><circle cx="7" cy="12.500" r="2" fill="#4285f4" /></svg></Slot>
        <Slot $w={44}><Line s={18} w={1.500}><path d="M5 6h4a3 3 0 0 1 6 0h5v4a2.500 2.500 0 0 0 0 6v4h-5a3 3 0 0 1-6 0H5v-5a2.500 2.500 0 0 1 0-5z" /></Line></Slot>
        <EdgeSep />
        <Slot $w={44} $ml={1}><Line s={18} w={1.500}><path d="M9 16l-5 4 1-7-4-4 6-1 3-6 3 6M14 9h9M14 14h9M13 19h10" /></Line></Slot>
        <Slot $w={44}><Line s={19} w={1.500}><path d="M3 4v5h5M3.500 9a9.500 9.500 0 1 1-1 4M12 7v6h4" /></Line></Slot>
        <Slot $w={44}><Line s={19} w={1.500}><path d="M12 2v16M5 12l7 7 7-7M3 23h18" /></Line></Slot>
        <Slot $w={44}><Line s={19} w={1.500}><path d="M14 21H3q-1 0-1-1V7q0-1 1-1h4l2-3h7l2 3h3q1 0 1 1v4" /><circle cx="12" cy="12" r="4.500" /><path d="M15 20l7-8" strokeWidth="4" /></Line></Slot>
        <Slot $w={44}><Avatar /></Slot>
        <Slot $w={44} $ml={3}><Ellipsis size={17} strokeWidth={2} /></Slot>
        <WinButtons>
          <Slot $w={46} $ml={-2}><Line s={10} vb="0 0 10 10" w={1}><path d="M0 5h10" /></Line></Slot>
          <Slot $w={46}><Line s={11} vb="0 0 11 11" w={1}><path d="M.5 3h7v7.500h-7zM3 3V.5h7.500V8H8" /></Line></Slot>
          <Slot $w={46}><CloseX s={11} w={0.9} /></Slot>
        </WinButtons>
      </EdgeBar>

      <Row>
        <Side>
          <SideItem><Line s={15} w={2.200} color="#bbb"><rect x="2" y="2" width="20" height="20" rx="3" /><path d="M7 3v18M2 7h20" /></Line></SideItem>
          <SideItem $h={32}><svg width="16" height="16" viewBox="0 0 16 16"><rect width="16" height="16" rx="2" fill="#a9bcc6" /><rect x="2" y="2" width="5" height="11" rx="1" fill="#fff" /><rect x="9" y="2" width="5" height="8" rx="1" fill="#fff" /></svg></SideItem>
          <SideItem $h={38}><svg width="16" height="14" viewBox="0 0 16 14"><path d="M5.500.500h5l5 8.500h-5z" fill="#fbbc04" /><path d="M5.500.500L8 5 3 13 .5 9z" fill="#1ea362" /><path d="M3 13l2.500-4h10L13 13z" fill="#4285f4" /></svg></SideItem>
          <SideItem $h={35}><BlueBook /></SideItem>
          <SideItem $on><BlueBook /></SideItem>
          <SideRule />
          <SideItem $h={41}><Line s={15} vb="0 0 15 15" w={1} color="#bbb"><path d="M7.500 0v15M0 7.500h15" /></Line></SideItem>
        </Side>

        <Main>
          <StreamBar>
            <StreamIcons />
            <Slot $w={25} $ml={962}><svg width="24" height="24" viewBox="0 0 24 24"><path d="M0 17h3.500v7H0z" fill="#e0142c" /><path d="M5 13h3v11H5zM10 9h3v15h-3zM15.500 4h3v20h-3zM21 0h3v24h-3z" fill="#d9dadc" /></svg></Slot>
            <Label $ml={20} $w={127}>Time 00:08:36</Label>
            <Label $w={66}>Activity</Label>
            <Slot $w={14}><ActivityBars width="14" height="20" viewBox="0 0 14 20"><path d="M0 20V3l2-2 1 1 1 5v13zM5 20V8l2-5 2-3 1 2 1 8 2 3v7z" fill="#5b8cc0" /></ActivityBars></Slot>
            <Slot $w={64} $ml={81}><Line s={26} w={1.800}><path d="M10 2h4l.6 2.600 2 .8 2.300-1.400 2.500 2.600-1.300 2.300.8 2 2.400.7v3.400l-2.400.7-.8 2 1.300 2.300-2.500 2.500-2.300-1.300-2 .8L14 23h-4l-.6-2.600-2-.8-2.300 1.300-2.600-2.500 1.400-2.300-.8-2L.700 14v-3.400l2.400-.7.8-2L2.500 5.600 5.100 3l2.300 1.400 2-.8z" /><circle cx="12" cy="12.300" r="3.800" /></Line></Slot>
            <Slot $w={64}><svg width="24" height="24" viewBox="0 0 24 24" fill="none" stroke="#111" strokeWidth="1.800"><circle cx="12" cy="12" r="11" /><path d="M9 9q0-3 3-3t3 2.800q0 1.600-1.800 2.600Q12 12 12 14" strokeWidth="2.200" /><path d="M12 16v2.300" strokeWidth="2.400" /></svg></Slot>
          </StreamBar>

          <Panel>
            <Slot $w={30}><svg width="26" height="26" viewBox="0 0 26 26"><circle cx="13" cy="13" r="13" fill="#0a45a8" /><path d="M5 11l2-1 1 2 3-5 1 4 3-4 0 4 3-5 1 1-2 6c4 3 1 8-4 8-3 1-8 0-7-4 1-2 1-3-1-6z" fill="#fff" /></svg></Slot>
            <Label $w={80}>Applications</Label>
            <TaskButton $w={198} $ml={13} $on><Fox s={16} /><span>Dash - Mozilla Firefox</span></TaskButton>
            <TaskButton $w={197} $ml={3}>
              <svg width="14" height="14" viewBox="0 0 14 14"><rect x=".5" y=".5" width="13" height="13" fill="#222" stroke="#777" /><path d="M3 4l2 1.500L3 7M6 9h4" stroke="#999" fill="none" /></svg>
              <span>[sergio.passos_snhu@...</span>
            </TaskButton>
            <Pager $on $ml={916}><Fox s={16} /></Pager><Pager /><Pager /><Pager />
            <Label $ml={4} $w={42}>03:15</Label>
            <Slot $w={20}><svg width="17" height="17" viewBox="0 0 17 17" fill="#7d807d"><path d="M3 15V6H0l5-6 5 6H7v9zM10 2h3v9h3l-4.500 6L7 11h3z" /></svg></Slot>
            <Label $ml={7.5}>sergio.passos_snhu</Label>
          </Panel>

          <TitleBar>
            <Slot $w={22}><Fox s={20} /></Slot>
            <TitleText>Dash - Mozilla Firefox</TitleText>
            <TitleButtons>
              {[<path d="M5.500 11V7.500H2L6.500 2 11 7.500H7.500V11z" fill="#fff" stroke="#777" strokeWidth=".7" />,
                <path d="M3 8.500h7v2.500H3z" fill="#fff" stroke="#777" strokeWidth=".7" />,
                <path d="M4 4V2h7v6.500H9M2 4.500h6.500v6.500H2z" fill="none" stroke="#fff" strokeWidth="1.700" />,
                <path d="M2.500 2.500l8 8M10.500 2.500l-8 8" stroke="#fff" strokeWidth="2.700" />].map((p, i) => (
                <Slot $w={22} key={i}><svg width="13" height="13" viewBox="0 0 13 13">{p}</svg></Slot>
              ))}
            </TitleButtons>
          </TitleBar>

          <TabStrip>
            <Tab $w={225}><Slot $w={17} $ml={9}><Jup /></Slot><TabName $w={171}>Desktop/</TabName><CloseX /><TabSep /></Tab>
            <Tab $w={224}><Slot $w={16} $ml={8}><svg width="14" height="14" viewBox="0 0 14 14"><path d="M4 .5h9L11 13H1.500Q0 13 .5 11z" fill="#f37b0c" /><path d="M5.500 3.500h5M5 5.500h5M2 11h8" stroke="#fff" strokeWidth="1.100" /></svg></Slot><TabName $w={168} $fade $ml={7}>ModuleSixMilestone - Jup</TabName><Slot $w={17} $ml={0}><CloseX /></Slot></Tab>
            <Tab $w={225} $on><Slot $w={17} $ml={8}><Jup /></Slot><TabName $w={172}>Dash</TabName><CloseX /></Tab>
            <TabFill><Plus size={18} strokeWidth={2.200} /></TabFill>
          </TabStrip>

          <NavBar>
            <Slot $w={40}><BackCircle><ArrowLeft size={20} strokeWidth={2.300} /></BackCircle></Slot>
            <Slot $w={27}><ArrowRight size={20} strokeWidth={2.300} color="#9da09e" /></Slot>
            <Slot $w={36}><Reload s={19} w={2.800} /></Slot>
            <Slot $w={28}><svg width="17" height="17" viewBox="0 0 17 17"><path d="M8.500 1.500L1 9h2.500v6.500h10V9H16z" fill="none" stroke="#4b4e4c" strokeWidth="1.900" strokeLinejoin="round" /><path d="M7 15v-5h3v5zM12 1.500h2V6l-2-2z" fill="#4b4e4c" /></svg></Slot>
            <UrlBox>
              <Slot $w={28}><Line s={15} w={2.200}><path d="M12 1.500l9.500 3C21.500 14 19 20 12 23 5 20 2.500 14 2.500 4.500z" /><path d="M12 6v12" strokeWidth="3" /></Line></Slot>
              <VRule />
              <Slot $w={28}><svg width="14" height="16" viewBox="0 0 14 16" fill="none" stroke="#777a78" strokeWidth="1.800"><path d="M3 1h5l5 5v7q0 2-2 2H3q-2 0-2-2V3q0-2 2-2zM8 1v5h5" /></svg></Slot>
              <UrlText><b>localhost</b>:8959/app/endpoints/ee7dc721bb904e8c9037714cadf40f06/</UrlText>
              <Pill>67%</Pill>
              <VRule $l={12} $r={7} />
              <Slot $w={28}><svg width="17" height="5" viewBox="0 0 17 5" fill="#6d706e"><circle cx="2.500" cy="2.500" r="2" /><circle cx="8.500" cy="2.500" r="2" /><circle cx="14.500" cy="2.500" r="2" /></svg></Slot>
              <Slot $w={28}><Line s={17} w={2.500}><path d="M3 3h18q2 0 2 2v6a11 11 0 0 1-22 0V5q0-2 2-2zM7 9.500l5 4.500 5-4.500" /></Line></Slot>
              <Slot $w={28}><Star size={18} strokeWidth={2.400} /></Slot>
            </UrlBox>
            <Slot $w={32} $ml={118}><svg width="16" height="15" viewBox="0 0 16 15" stroke="#4b4e4c" strokeWidth="1.700"><path d="M1 1v13M4.500 1v13M8 1v13M10.500 1.500L15 14" /></svg></Slot>
            <Slot $w={32}><svg width="16" height="15" viewBox="0 0 16 15" fill="none" stroke="#4b4e4c" strokeWidth="1.800"><rect x="1" y="1" width="14" height="13" rx="2" /><path d="M8 1v13M3.500 4h2M3.500 6.500h2M3.500 9h2" strokeWidth="1.300" /></svg></Slot>
            <Slot $w={32}><svg width="19" height="19" viewBox="0 0 19 19" fill="none" stroke="#4b4e4c" strokeWidth="1.300"><circle cx="8" cy="11" r="7" /><circle cx="8" cy="9" r="3.200" fill="#4b4e4c" /><path d="M3.500 15Q8 11 12.500 15q-4.500 4-9 0z" fill="#4b4e4c" /><circle cx="16" cy="3.500" r="3" fill="#12aaf5" stroke="none" /></svg></Slot>
            <VRule $h={34} $c="#b9bcba" $l={2} />
            <Slot $w={40}><svg width="13" height="12" viewBox="0 0 13 12" stroke="#4b4e4c" strokeWidth="2"><path d="M0 1h13M0 6h13M0 11h13" /></svg></Slot>
          </NavBar>

          <View>
            <Page>
              <Head><H1>SNHU CS-340 Dashboard</H1><H5>Sergio H. Passos</H5></Head>
              <Hr />
              <Filters>
                <div>
                  <FilterRow>
                    <FilterItem $w={95.300}><Radio /><span>Water Rescue</span></FilterItem>
                    <FilterItem $w={180.200}><Radio /><span>Mountain/Wilderness Rescue</span></FilterItem>
                    <FilterItem $w={241.200}><Radio /><span>Disaster Rescue and Individual Tracking</span></FilterItem>
                    <FilterItem $w={60}><Radio $on /><span>Reset</span></FilterItem>
                  </FilterRow>
                  <Hr $w={1754} />
                </div>
                <DogLogo />
              </Filters>
              <Grid>
                <Cell />
                {columns.map((c, i) => <HeadCell key={c} $first={i === 0}><Sort /><span>{c}</span></HeadCell>)}
                <Cell />
                {columns.map((c, i) => <FilterCell key={c}>{i === 0 ? "filt" : ""}</FilterCell>)}
                {rows.map((r, i) => (
                  <React.Fragment key={i}>
                    <PickCell><Radio $on={i === 0} /></PickCell>
                    {r.map((v, j) => <Cell key={j} $low={i % 3 === 0}>{v}</Cell>)}
                  </React.Fragment>
                ))}
              </Grid>
              <PageRow>
                <PageHr><Hr /></PageHr>
                <PageButton $w={14} $ml={4} $off><Chevrons dbl flip /></PageButton>
                <PageButton $w={11} $ml={7} $off><Chevrons flip /></PageButton>
                <PageInput>1</PageInput>
                <PageText $ml={9} $w={5}>/</PageText>
                <PageText $ml={9} $w={20}>2001</PageText>
                <PageButton $w={11} $ml={6}><Chevrons /></PageButton>
                <PageButton $w={14} $ml={7}><Chevrons dbl /></PageButton>
              </PageRow>
              <Bottom>
                <MapBox><TexasMap /><ZoomBox><span>+</span><span>−</span></ZoomBox></MapBox>
                <Pie />
              </Bottom>
            </Page>
            <Gutter><Thumb /></Gutter>
          </View>

          <Desktop>
            <Dock><DockIcons /></Dock>
          </Desktop>
        </Main>
      </Row>
      <Taskbar><Tasks /></Taskbar>
    </Screen>
  );
}
